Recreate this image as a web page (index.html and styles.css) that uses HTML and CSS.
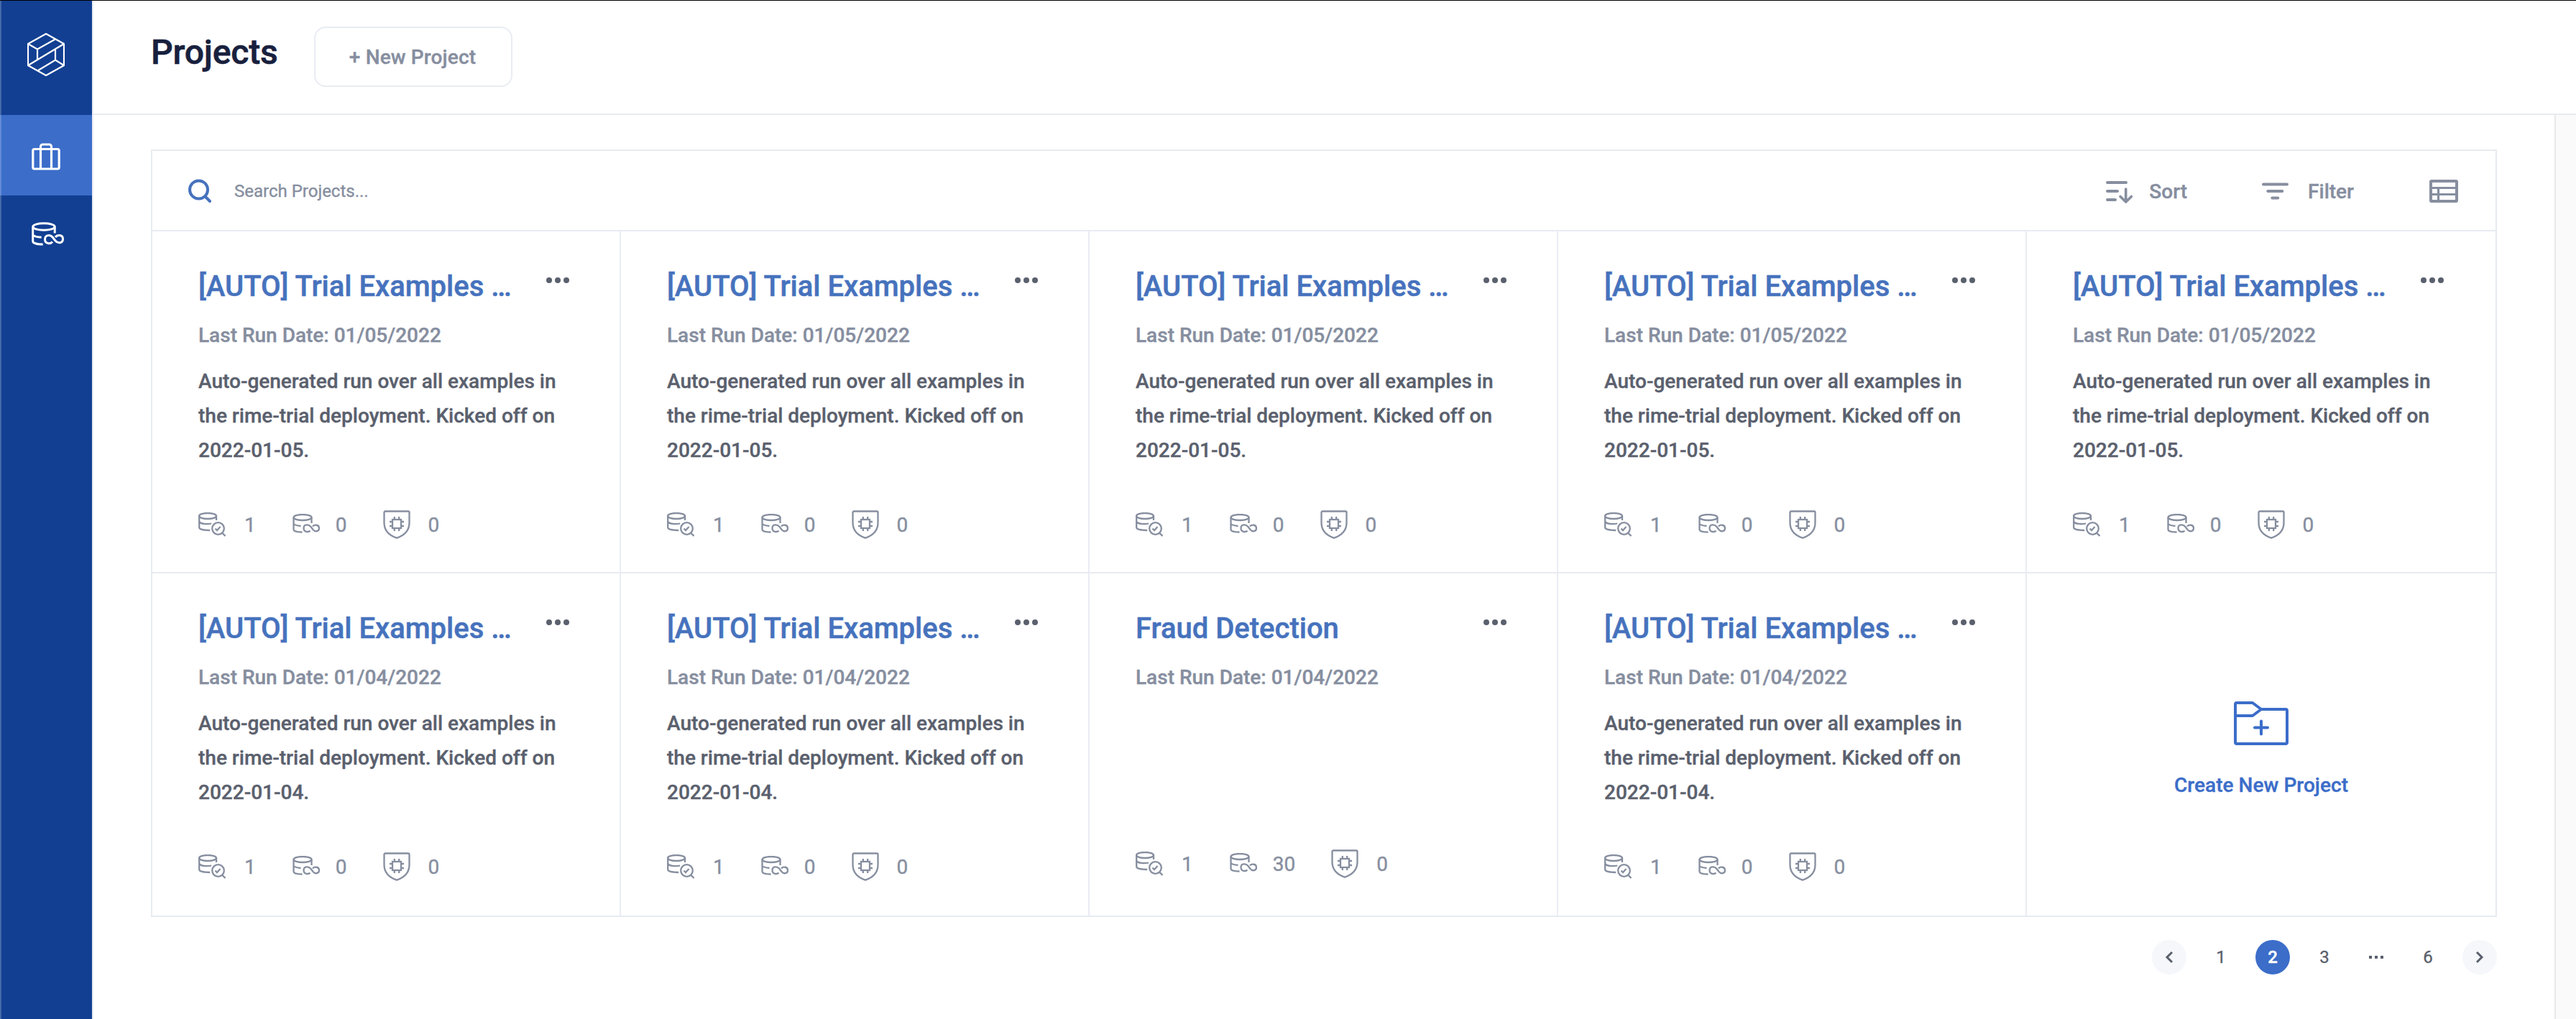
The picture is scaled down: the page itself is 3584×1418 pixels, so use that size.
FILE: index.html
```html
<!DOCTYPE html>
<html lang="en">
<head>
<meta charset="utf-8">
<title>Projects</title>
<link rel="stylesheet" href="styles.css">
</head>
<body>
<svg class="sprite" aria-hidden="true">
  <symbol id="db-check" viewBox="0 0 38 34">
    <g fill="none" stroke="currentColor" stroke-width="2.300">
      <ellipse cx="13" cy="5" rx="12" ry="4"/>
      <path d="M1.200 5v16c0 2.500 6 4 15 4M25 5v6M1.200 13c2 3 10 4 17 2.500"/>
      <circle cx="27.500" cy="22.500" r="8.300"/>
      <path d="M33 28.500l4.500 4.500M23.500 22.500l2.500 2.500 4.500-5"/>
    </g>
  </symbol>
  <symbol id="db-loop" viewBox="0 0 38 27">
    <g fill="none" stroke="currentColor" stroke-width="2.300">
      <ellipse cx="14" cy="5" rx="12.500" ry="4"/>
      <path d="M1.500 5v17c0 2 5 3.500 12 3.500M26.500 5v8M1.500 14c1.500 1.500 5 2.500 10 3"/>
      <path d="M24.500 23.500c-2 2.200-9 2.500-9-3.500s7-5.500 10-2l3 4c3 3.500 8.500 3 8.500-2s-6.500-5.500-9-2.500"/>
    </g>
  </symbol>
  <symbol id="nav-loop" viewBox="0 0 46 34">
    <g fill="none" stroke="currentColor" stroke-width="3">
      <ellipse cx="17" cy="6.500" rx="15.200" ry="4.800"/>
      <path d="M1.700 6.500v20c0 2.500 5 4.500 14 4.500M32.200 6.500v9M1.700 18c2 2 6 3 12 3.200"/>
      <path d="M29 27.500c-3 3.500-10.500 3-10.500-3.500s7.500-7 11-2.500l3.500 4.500c4 4.500 10.500 3.500 10.500-2.500s-7.500-6.500-10.500-2.500"/>
    </g>
  </symbol>
  <symbol id="shield" viewBox="0 0 38 40">
    <g fill="none" stroke="currentColor" stroke-width="2.300">
      <path d="M3 1.500h32a1.500 1.500 0 0 1 1.500 1.500v14.500c0 11-7 17.500-17.500 21.200C8.500 35 1.500 28.500 1.500 17.500V3A1.500 1.500 0 0 1 3 1.500z"/>
      <rect x="13" y="13" width="12" height="12"/>
      <path d="M15.800 13v-4M22.200 13v-4M15.800 25v4M22.200 25v4M13 16h-4M13 22h-4M25 16h4M25 22h4"/>
    </g>
  </symbol>
  <symbol id="dots" viewBox="0 0 34 10">
    <g fill="currentColor"><circle cx="5" cy="5" r="4"/><circle cx="17" cy="5" r="4"/><circle cx="29" cy="5" r="4"/></g>
  </symbol>
</svg>
<div class="app">
  <nav class="sidebar">
    <a class="brand"><svg width="52" height="60" viewBox="0 0 52 60" fill="none" stroke="currentColor" stroke-width="2.200"><path d="M26 1L51 15V45L26 59L1 45V15ZM1 15L14 22.500L39 8.500M14 22.500V37M1 45L51 15M15 52L39 37.500L51 45M39 37.500V23"/></svg></a>
    <a class="nav-item active"><svg width="40" height="38" viewBox="0 0 40 38" fill="none" stroke="currentColor" stroke-width="3.200"><rect x="1.800" y="8.500" width="36.400" height="27.500" rx="2"/><path d="M12.500 36V5a3 3 0 0 1 3-3h9a3 3 0 0 1 3 3V36"/></svg></a>
    <a class="nav-item"><svg width="46" height="34"><use href="#nav-loop"/></svg></a>
  </nav>
  <div class="page">
    <header class="header">
      <h1 class="title">Projects</h1>
      <button class="new-project">+ New Project</button>
    </header>
    <div class="body">
      <main class="content">
        <section class="panel">
          <div class="toolbar">
            <svg class="search-icon" width="34" height="34" viewBox="0 0 34 34" fill="none" stroke="currentColor" stroke-width="4" stroke-linecap="round"><circle cx="15.500" cy="15" r="12.500"/><path d="M25 25l6 6"/></svg>
            <span class="search">Search Projects...</span>
            <div class="tool sort"><svg width="38" height="36" viewBox="0 0 38 36" fill="none" stroke="currentColor" stroke-width="4" stroke-linecap="round"><path d="M2 6h26M2 18h14M2 30h11"/><path stroke-width="3.600" stroke-linejoin="round" d="M27.700 15v18M20 25.500l7.700 7.500 7.700-7.500"/></svg><span>Sort</span></div>
            <div class="tool filter"><svg width="38" height="26" viewBox="0 0 38 26" fill="none" stroke="currentColor" stroke-width="4" stroke-linecap="round"><path d="M2 3.400h33M8.300 13h20M14.300 22.500h8"/></svg><span>Filter</span></div>
            <svg class="table-icon" width="40" height="32" viewBox="0 0 40 32" fill="none" stroke="currentColor" stroke-width="4"><rect x="2" y="2" width="36" height="28" rx="1"/><path stroke-width="3.200" d="M2 11.500h36M2 20.500h36M12.500 10v20"/></svg>
          </div>
          <div class="grid">
            <article class="card"><svg class="menu"><use href="#dots"/></svg><h2>[AUTO] Trial Examples …</h2><p class="date">Last Run Date: 01/05/2022</p><p class="desc">Auto-generated run over all examples in the rime-trial deployment. Kicked off on 2022-01-05.</p><div class="stats"><svg class="i-check"><use href="#db-check"/></svg><span>1</span><svg class="i-loop"><use href="#db-loop"/></svg><span>0</span><svg class="i-shield"><use href="#shield"/></svg><span>0</span></div></article>
            <article class="card"><svg class="menu"><use href="#dots"/></svg><h2>[AUTO] Trial Examples …</h2><p class="date">Last Run Date: 01/05/2022</p><p class="desc">Auto-generated run over all examples in the rime-trial deployment. Kicked off on 2022-01-05.</p><div class="stats"><svg class="i-check"><use href="#db-check"/></svg><span>1</span><svg class="i-loop"><use href="#db-loop"/></svg><span>0</span><svg class="i-shield"><use href="#shield"/></svg><span>0</span></div></article>
            <article class="card"><svg class="menu"><use href="#dots"/></svg><h2>[AUTO] Trial Examples …</h2><p class="date">Last Run Date: 01/05/2022</p><p class="desc">Auto-generated run over all examples in the rime-trial deployment. Kicked off on 2022-01-05.</p><div class="stats"><svg class="i-check"><use href="#db-check"/></svg><span>1</span><svg class="i-loop"><use href="#db-loop"/></svg><span>0</span><svg class="i-shield"><use href="#shield"/></svg><span>0</span></div></article>
            <article class="card"><svg class="menu"><use href="#dots"/></svg><h2>[AUTO] Trial Examples …</h2><p class="date">Last Run Date: 01/05/2022</p><p class="desc">Auto-generated run over all examples in the rime-trial deployment. Kicked off on 2022-01-05.</p><div class="stats"><svg class="i-check"><use href="#db-check"/></svg><span>1</span><svg class="i-loop"><use href="#db-loop"/></svg><span>0</span><svg class="i-shield"><use href="#shield"/></svg><span>0</span></div></article>
            <article class="card"><svg class="menu"><use href="#dots"/></svg><h2>[AUTO] Trial Examples …</h2><p class="date">Last Run Date: 01/05/2022</p><p class="desc">Auto-generated run over all examples in the rime-trial deployment. Kicked off on 2022-01-05.</p><div class="stats"><svg class="i-check"><use href="#db-check"/></svg><span>1</span><svg class="i-loop"><use href="#db-loop"/></svg><span>0</span><svg class="i-shield"><use href="#shield"/></svg><span>0</span></div></article>
            <article class="card"><svg class="menu"><use href="#dots"/></svg><h2>[AUTO] Trial Examples …</h2><p class="date">Last Run Date: 01/04/2022</p><p class="desc">Auto-generated run over all examples in the rime-trial deployment. Kicked off on 2022-01-04.</p><div class="stats"><svg class="i-check"><use href="#db-check"/></svg><span>1</span><svg class="i-loop"><use href="#db-loop"/></svg><span>0</span><svg class="i-shield"><use href="#shield"/></svg><span>0</span></div></article>
            <article class="card"><svg class="menu"><use href="#dots"/></svg><h2>[AUTO] Trial Examples …</h2><p class="date">Last Run Date: 01/04/2022</p><p class="desc">Auto-generated run over all examples in the rime-trial deployment. Kicked off on 2022-01-04.</p><div class="stats"><svg class="i-check"><use href="#db-check"/></svg><span>1</span><svg class="i-loop"><use href="#db-loop"/></svg><span>0</span><svg class="i-shield"><use href="#shield"/></svg><span>0</span></div></article>
            <article class="card"><svg class="menu"><use href="#dots"/></svg><h2>Fraud Detection</h2><p class="date">Last Run Date: 01/04/2022</p><p class="desc empty"></p><div class="stats"><svg class="i-check"><use href="#db-check"/></svg><span>1</span><svg class="i-loop"><use href="#db-loop"/></svg><span>30</span><svg class="i-shield"><use href="#shield"/></svg><span>0</span></div></article>
            <article class="card"><svg class="menu"><use href="#dots"/></svg><h2>[AUTO] Trial Examples …</h2><p class="date">Last Run Date: 01/04/2022</p><p class="desc">Auto-generated run over all examples in the rime-trial deployment. Kicked off on 2022-01-04.</p><div class="stats"><svg class="i-check"><use href="#db-check"/></svg><span>1</span><svg class="i-loop"><use href="#db-loop"/></svg><span>0</span><svg class="i-shield"><use href="#shield"/></svg><span>0</span></div></article>
            <article class="card create">
              <svg width="76" height="62" viewBox="0 0 76 62" fill="none" stroke="currentColor" stroke-width="4" stroke-linejoin="round"><path d="M2 20V4a2 2 0 0 1 2-2h22l12 9h34a2 2 0 0 1 2 2V57a2 2 0 0 1-2 2H4a2 2 0 0 1-2-2V20h24l12-9"/><path stroke-linecap="round" d="M29 36.500h18M38 27.500v18"/></svg>
              <span>Create New Project</span>
            </article>
          </div>
        </section>
        <div class="pager">
          <a class="arrow"><svg width="12" height="18" viewBox="0 0 12 18" fill="none" stroke="currentColor" stroke-width="3"><path d="M10 2L3 9l7 7"/></svg></a>
          <a>1</a><a class="current">2</a><a>3</a>
          <a><svg width="22" height="6" viewBox="0 0 22 6" fill="currentColor"><path d="M1 1h4v4H1zM9 1h4v4H9zM17 1h4v4h-4z"/></svg></a>
          <a>6</a>
          <a class="arrow"><svg width="12" height="18" viewBox="0 0 12 18" fill="none" stroke="currentColor" stroke-width="3"><path d="M2 2l7 7-7 7"/></svg></a>
        </div>
      </main>
      <div class="scrollbar"></div>
    </div>
  </div>
</div>
</body>
</html>
```
FILE: styles.css
```css
* { box-sizing: border-box; }
body { margin: 0; background: #fff; font-family: Roboto, sans-serif; font-size: 28px; font-weight: 500; color: #868e9f; -webkit-text-stroke: 0.35px currentColor; }
h1, h2, p { margin: 0; }
svg { display: block; flex: none; }
.sprite { width: 0; height: 0; position: absolute; }
.app { display: flex; height: 1418px; border-top: 1px solid #000; overflow: hidden; }

.sidebar { width: 128px; flex: none; background: #123f92; color: #fff; border-left: 2px solid #4367a8; }
.brand { display: flex; justify-content: center; height: 159px; padding: 45px 2px 0 0; }
.nav-item { display: flex; justify-content: center; align-items: center; height: 112px; padding-right: 2px; }
.nav-item.active { background: #3b6dc9; margin-left: -2px; padding: 4px 2px 0 0; border-left: 2px solid #628ad4; }
.nav-item:last-child { padding: 0 0 4px 4px; }

.page { flex: 1; min-width: 0; display: flex; flex-direction: column; border-left: 2px solid #e9ecf3; }
.header { height: 159px; flex: none; display: flex; align-items: flex-start; padding: 36px 0 0 80px; border-bottom: 2px solid #e7ebf1; }
.title { width: 227px; padding-top: 8px; font-size: 48px; line-height: 56px; font-weight: 500; letter-spacing: -0.15px; color: #18203d; -webkit-text-stroke-width: 0.6px; }
.new-project { width: 276px; height: 84px; border: 2px solid #e9ecf3; border-radius: 16px; background: #fff; font: inherit; letter-spacing: 0.15px; color: #868e9f; padding: 0 2px 0 0; }

.body { flex: 1; display: flex; min-height: 0; }
.content { flex: 1; padding: 48px 80px 0; }
.scrollbar { width: 30px; background: #fafafa; border-left: 2px solid #e8e8e8; }

.panel { width: 3264px; border: 2px solid #e7ebf1; }
.toolbar { height: 112px; display: flex; align-items: center; padding: 2px 52px 0 49px; border-bottom: 2px solid #e7ebf1; }
.search-icon { color: #4672bd; }
.search { flex: 1; margin-left: 31px; padding-bottom: 1px; font-size: 24px; font-weight: 400; }
.tool { display: flex; align-items: center; }
.sort { gap: 22px; margin-right: 104px; }
.filter { gap: 26px; margin-right: 105px; }

.grid { display: grid; grid-template-columns: repeat(5, 652px); grid-template-rows: 476px 476px; }
.card { position: relative; padding: 51px 60px 0 64px; border-right: 2px solid #e9ecf3; border-bottom: 2px solid #e7ebf1; }
.card:nth-child(5n) { border-right: 0; }
.card:nth-child(n+6) { border-bottom: 0; }
.menu { position: absolute; top: 63px; left: 547px; width: 34px; height: 10px; color: #5a606d; }
.card h2 { font-size: 40px; line-height: 52px; font-weight: 500; color: #4672bd; white-space: nowrap; -webkit-text-stroke-width: 0.5px; }
.date { margin-top: 25px; line-height: 34px; }
.desc { margin-top: 23px; height: 144px; line-height: 48px; color: #5a606d; }
.desc.empty { height: 140px; }
.stats { display: flex; align-items: center; height: 40px; margin-top: 59px; font-weight: 400; }
.i-check { width: 38px; height: 34px; margin-right: 26px; }
.i-loop { width: 38px; height: 27px; margin: 0 22px 3px 51px; }
.i-shield { width: 38px; height: 40px; margin: 0 25px 0 50px; }
.create { display: flex; flex-direction: column; align-items: center; padding: 178px 0 0; color: #3b6dc9; }
.create span { margin-top: 38px; letter-spacing: 0.05px; }

.pager { width: 3264px; display: flex; justify-content: flex-end; gap: 24px; margin-top: 32px; font-size: 24px; font-weight: 400; color: #5a606d; }
.pager a { width: 48px; height: 48px; border-radius: 50%; display: flex; align-items: center; justify-content: center; }
.pager .arrow { background: #f5f7fb; }
.pager .current { background: #3b6dc9; color: #fff; font-weight: 500; }
```
